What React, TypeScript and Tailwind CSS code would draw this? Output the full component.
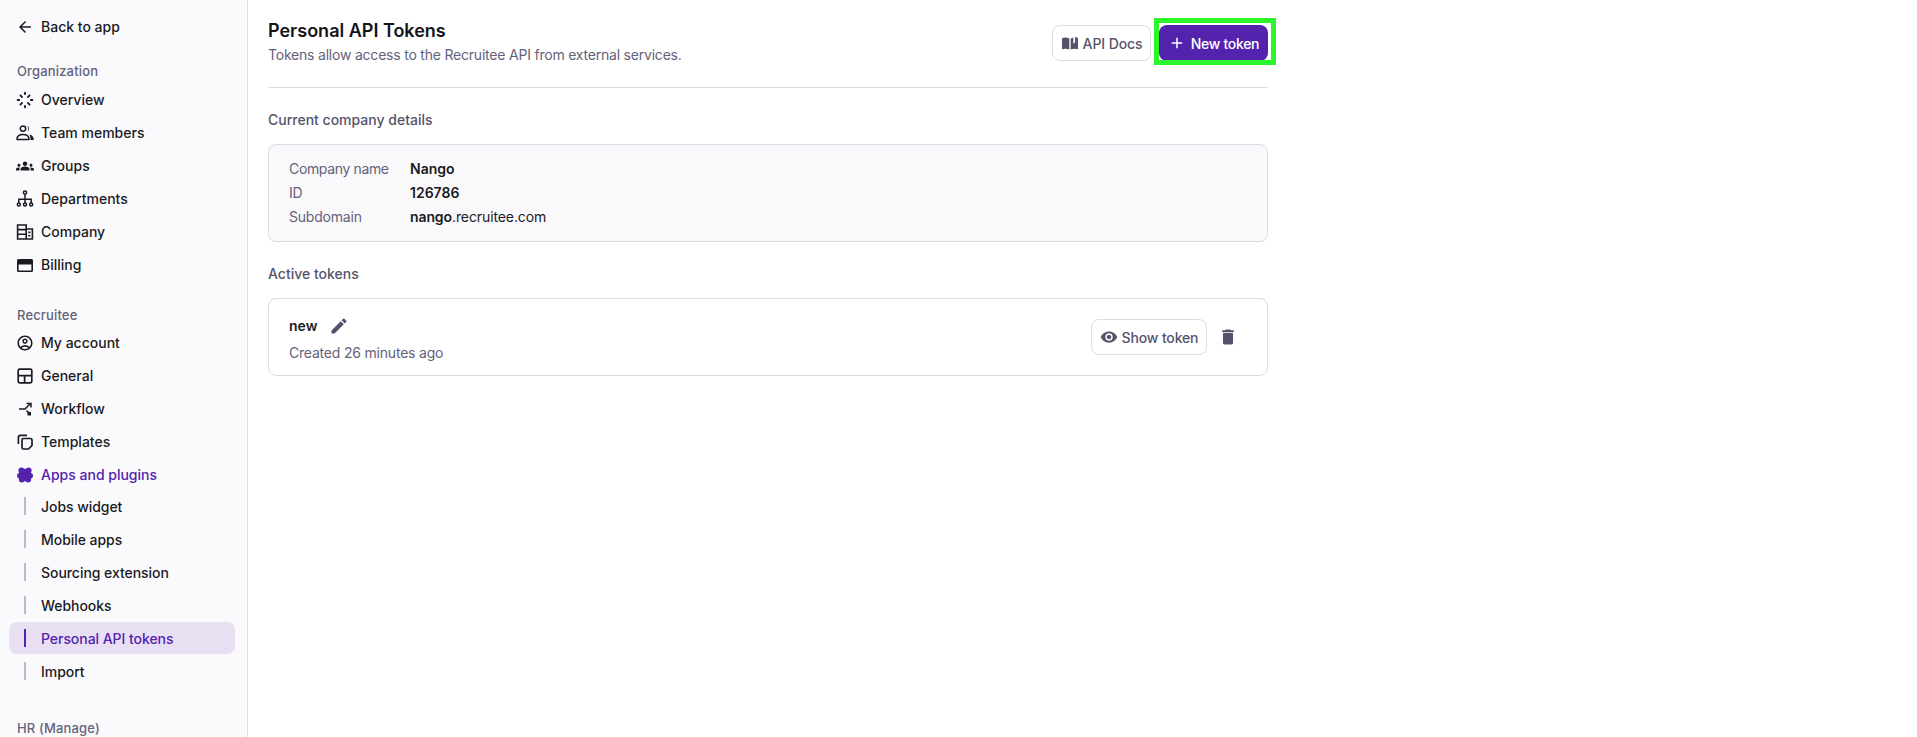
import React from "react";
import { MdArrowBack, MdGroups, MdOutlineAccountCircle, MdVisibility, MdDelete, MdEdit, MdAdd } from "react-icons/md";

type IC = React.ComponentType<{ className?: string }>;

const Overview: IC = ({ className }) => (
  <svg viewBox="0 0 18 18" className={className} fill="none" stroke="currentColor" strokeWidth="1.8" strokeLinecap="round">
    <path d="M9 1.6v1.6M9 14.8v1.6M1.6 9h1.6M14.8 9h1.6M4.4 4.4l1.6 1.6M12 12l1.6 1.6M13.6 4.4L12 6M6 12l-1.6 1.6" />
  </svg>
);
const Team: IC = ({ className }) => (
  <svg viewBox="0 0 18 18" className={className}>
    <circle cx="7" cy="4.6" r="2.7" fill="none" stroke="currentColor" strokeWidth="1.5" />
    <path d="M1 15.4c0-3.3 2.6-4.8 6-4.8s6 1.500 6 4.800z" fill="none" stroke="currentColor" strokeWidth="1.5" strokeLinejoin="round" />
    <path fill="currentColor" d="M11.200 1.800a3 3 0 0 1 0 5.600 4.400 4.400 0 0 0 0-5.600zM13.400 10.400c2.500.5 4.400 2 4.400 5.700h-3.300c0-2.300-.2-4.100-1.100-5.700z" />
  </svg>
);
const Departments: IC = ({ className }) => (
  <svg viewBox="0 0 18 18" className={className} fill="none" stroke="currentColor" strokeWidth="1.5">
    <circle cx="9" cy="2.6" r="1.6" />
    <circle cx="2.8" cy="14.6" r="1.5" />
    <circle cx="9" cy="14.6" r="1.5" />
    <circle cx="15.2" cy="14.6" r="1.5" />
    <path d="M9 4.2v8.9M2.8 13.1V9.2h12.4v3.9" />
  </svg>
);
const Company: IC = ({ className }) => (
  <svg viewBox="0 0 18 18" className={className} fill="none" stroke="currentColor" strokeWidth="1.6">
    <path d="M1.6 2h8.6v14H1.6zM10.2 6h6.2v10h-6.2zM1.6 6.600h8.600M1.600 11.200h8.600" />
    <path d="M12.200 9.400h2.200M12.200 12.800h2.200" />
  </svg>
);
const Billing: IC = ({ className }) => (
  <svg viewBox="0 0 18 18" className={className}>
    <path fill="currentColor" fillRule="evenodd" d="M2.500 3h13A1.500 1.500 0 0 1 17 4.500v10a1.500 1.500 0 0 1-1.500 1.500h-13A1.500 1.500 0 0 1 1 14.500v-10A1.500 1.500 0 0 1 2.500 3zM2.600 8.600v5.800h12.800V8.600z" />
  </svg>
);
const General: IC = ({ className }) => (
  <svg viewBox="0 0 18 18" className={className} fill="none" stroke="currentColor" strokeWidth="1.7">
    <rect x="2.200" y="2.200" width="13.600" height="13.600" rx="1.500" />
    <path d="M2.200 8.600h13.600M8.600 8.600v7.200" />
  </svg>
);
const Workflow: IC = ({ className }) => (
  <svg viewBox="0 0 18 18" className={className} fill="none" stroke="currentColor" strokeWidth="1.5">
    <path d="M3 9h6l5-5" />
    <path d="M10.500 3.500h4.500v4M10.500 10.500l3 3" />
    <rect x="11.500" y="12" width="3.500" height="3.500" fill="currentColor" stroke="none" />
  </svg>
);
const Templates: IC = ({ className }) => (
  <svg viewBox="0 0 18 18" className={className} fill="none" stroke="currentColor" strokeWidth="1.7" strokeLinejoin="round">
    <path d="M7.500 5.500h7a1.500 1.500 0 0 1 1.500 1.500v5.500l-3.500 3.500h-5A1.500 1.500 0 0 1 6 14.500V7a1.500 1.500 0 0 1 1.500-1.500z" />
    <path d="M11 2.400H4.500A2.200 2.200 0 0 0 2.400 4.600V11" />
  </svg>
);
const Plugin: IC = ({ className }) => (
  <svg viewBox="0 0 18 18" className={className} fill="currentColor">
    <circle cx="9" cy="9" r="6.300" />
    <circle cx="5.400" cy="4.600" r="3" />
    <circle cx="12.600" cy="4.600" r="3" />
    <circle cx="3.800" cy="9.800" r="2.800" />
    <circle cx="14.200" cy="9.800" r="2.800" />
    <circle cx="5.800" cy="13.600" r="2.900" />
    <circle cx="12.200" cy="13.600" r="2.900" />
  </svg>
);
const Book: IC = ({ className }) => (
  <svg viewBox="0 0 18 18" className={className} fill="currentColor">
    <path d="M1 4.200C2.800 3.200 5.800 3 8.300 4.400V15.600C6 14.400 3 14.400 1 15.200z" />
    <path d="M9.700 4.400c.9-.5 1.700-.8 2.600-1v6.400l1.800-1.200V3.100c1 0 2 .4 2.900 1.100v11c-2-.8-5-.8-7.300.4z" />
  </svg>
);

const Row = ({ icon: I, label, active }: { icon: IC; label: string; active?: boolean }) => (
  <div className={`h-[33px] pl-[16px] flex items-center gap-[7px] text-[14px] font-medium ${active ? "text-[#5423ad]" : "text-[#1a1a22]"}`}>
    <I className="w-[18px] h-[18px] shrink-0 text-[18px]" />
    <span>{label}</span>
  </div>
);

const Sub = ({ label, active }: { label: string; active?: boolean }) => (
  <div className={`relative h-[32px] mb-[1px] ml-[9px] mr-[12px] rounded-[8px] pl-[32px] flex items-center text-[14px] font-medium tracking-[-0.05px] ${active ? "bg-[#e8dff3] text-[#5423ad]" : "text-[#1a1a22]"}`}>
    <span className={`absolute left-[15px] top-[7px] h-[18px] w-[2px] ${active ? "bg-[#5423ad]" : "bg-[#bcbac6]"}`} />
    {label}
  </div>
);

const Heading = ({ children, className }: { children: React.ReactNode; className?: string }) => (
  <div className={`pl-[17px] text-[13px] leading-[18px] font-medium tracking-[0.15px] text-[#64627a] ${className ?? ""}`}>{children}</div>
);

export default function App() {
  return (
    <div className="h-[737px] w-full overflow-hidden flex bg-white text-[#1a1a22] [font-family:Inter,sans-serif]">
      <aside className="w-[248px] shrink-0 bg-[#fafafd] border-r border-[#dcdce6] overflow-hidden pt-[10px]">
        <Row icon={MdArrowBack} label="Back to app" />
        <Heading className="mt-[19px] mb-[3px]">Organization</Heading>
        <Row icon={Overview} label="Overview" />
        <Row icon={Team} label="Team members" />
        <Row icon={MdGroups} label="Groups" />
        <Row icon={Departments} label="Departments" />
        <Row icon={Company} label="Company" />
        <Row icon={Billing} label="Billing" />
        <Heading className="mt-[25px] mb-[2px]">Recruitee</Heading>
        <Row icon={MdOutlineAccountCircle} label="My account" />
        <Row icon={General} label="General" />
        <Row icon={Workflow} label="Workflow" />
        <Row icon={Templates} label="Templates" />
        <div className="mb-[-1px]"><Row icon={Plugin} label="Apps and plugins" active /></div>
        <Sub label="Jobs widget" />
        <Sub label="Mobile apps" />
        <Sub label="Sourcing extension" />
        <Sub label="Webhooks" />
        <Sub label="Personal API tokens" active />
        <Sub label="Import" />
        <Heading className="mt-[32px]">HR (Manage)</Heading>
      </aside>
      <main className="w-[1000px] ml-[20px] pt-[20px]">
        <div className="flex items-start justify-between border-b border-[#dcdce6] h-[68px]">
          <div>
            <h1 className="text-[18px] leading-[22px] font-semibold text-[#14141a]">Personal API Tokens</h1>
            <p className="mt-[3px] text-[14px] leading-[20px] tracking-[-0.21px] text-[#64627a]">Tokens allow access to the Recruitee API from external services.</p>
          </div>
          <div className="relative flex gap-[8px] mt-[5px]">
            <button className="h-[36px] w-[99px] flex items-center justify-center gap-[4px] rounded-[8px] border border-[#dcdce6] bg-white text-[14px] font-medium tracking-[-0.1px] text-[#55536b]">
              <Book className="w-[18px] h-[18px]" />API Docs
            </button>
            <button className="h-[36px] w-[109px] flex items-center justify-center gap-[5px] rounded-[8px] bg-[#5423ad] text-[14px] font-medium tracking-[-0.3px] text-white">
              <MdAdd className="text-[18px]" />New token
            </button>
            <span className="absolute left-[102px] -top-[7px] w-[122px] h-[47px] border-[5px] border-[#2bf52b]" />
          </div>
        </div>
        <h2 className="mt-[22px] text-[14px] leading-[20px] font-medium text-[#55536b]">Current company details</h2>
        <div className="mt-[14px] h-[98px] rounded-[8px] border border-[#dcdce6] bg-[#f9f9fb] px-[20px] py-[12px] text-[14px] leading-[24px]">
          <div className="flex"><span className="w-[121px] tracking-[-0.35px] text-[#64627a]">Company name</span><span className="font-semibold">Nango</span></div>
          <div className="flex"><span className="w-[121px] tracking-[-0.2px] text-[#64627a]">ID</span><span className="font-semibold">126786</span></div>
          <div className="flex"><span className="w-[121px] tracking-[-0.2px] text-[#64627a]">Subdomain</span><span className="tracking-[-0.1px]"><b className="font-semibold">nango</b>.recruitee.com</span></div>
        </div>
        <h2 className="mt-[22px] text-[14px] leading-[20px] font-medium text-[#55536b]">Active tokens</h2>
        <div className="mt-[14px] h-[78px] rounded-[8px] border border-[#dcdce6] bg-white pl-[20px] pr-[29px] flex items-center justify-between">
          <div className="mt-[5px]">
            <div className="flex items-center gap-[12px] text-[14px] leading-[20px] font-semibold">new<MdEdit className="text-[20px] text-[#55536b]" /></div>
            <div className="mt-[7px] text-[14px] leading-[20px] tracking-[-0.2px] text-[#64627a]">Created 26 minutes ago</div>
          </div>
          <div className="flex items-center gap-[11px]">
            <button className="h-[36px] w-[116px] flex items-center justify-center gap-[4px] rounded-[8px] border border-[#dcdce6] bg-white text-[14px] font-medium tracking-[-0.15px] text-[#55536b]">
              <MdVisibility className="text-[18px]" />Show token
            </button>
            <MdDelete className="text-[20px] text-[#55536b]" />
          </div>
        </div>
      </main>
    </div>
  );
}
